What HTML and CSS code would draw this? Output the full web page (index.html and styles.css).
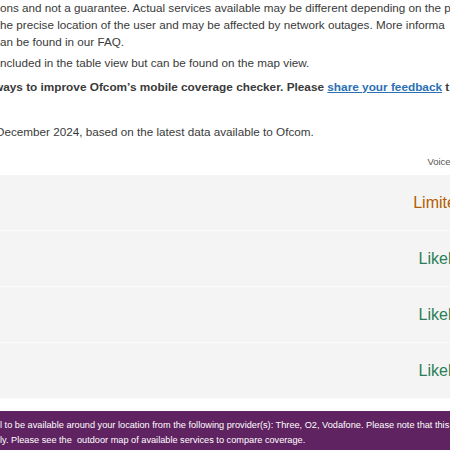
FILE: index.html
```html
<!DOCTYPE html>
<html lang="en">
<head>
    <meta charset="UTF-8">
    <meta name="viewport" content="width=device-width, initial-scale=1.0">
    <title>Mobile coverage checker</title>
    <link rel="stylesheet" href="styles.css">
</head>
<body>
    <section class="notes">
        <p class="note">
            <span class="line">ons and not a guarantee. Actual services available may be different depending on the p</span>
            <span class="line">he precise location of the user and may be affected by network outages. More informa</span>
            <span class="line">an be found in our FAQ.</span>
        </p>
        <p class="note">
            <span class="line">ncluded in the table view but can be found on the map view.</span>
        </p>
        <p class="note note-bold">
            <span class="line cut-w">ways to improve Ofcom’s mobile coverage checker. Please <a href="#" class="feedback-link">share your feedback</a> t</span>
        </p>
        <p class="note note-date">
            <span class="line cut-d">December 2024, based on the latest data available to Ofcom.</span>
        </p>
    </section>

    <section class="coverage">
        <div class="coverage-head">
            <div></div>
            <div class="col-title">Voice</div>
        </div>
        <div class="coverage-row">
            <div></div>
            <div class="status status-limited">Limited</div>
        </div>
        <div class="coverage-row">
            <div></div>
            <div class="status status-likely">Likely</div>
        </div>
        <div class="coverage-row">
            <div></div>
            <div class="status status-likely">Likely</div>
        </div>
        <div class="coverage-row">
            <div></div>
            <div class="status status-likely">Likely</div>
        </div>
    </section>

    <div class="provider-banner">
        <span class="line">l to be available around your location from the following provider(s): Three, O2, Vodafone. Please note that this</span>
        <span class="line">ly. Please see the &nbsp;outdoor map of available services to compare coverage.</span>
    </div>
</body>
</html>
```

FILE: styles.css
```css
* {
    margin: 0;
    padding: 0;
    box-sizing: border-box;
    font-family: 'Liberation Sans', Arial, sans-serif;
}

:root {
    --text: #3a3a3a;
    --row: #f4f4f4;
    --link: #2a70b3;
    --limited: #b35d00;
    --likely: #2b7d58;
    --purple: #5f2361;
}

html, body {
    overflow: hidden;
}

body {
    background-color: #fff;
    color: var(--text);
    width: 450px;
    height: 450px;
}

.notes {
    margin-top: -1px;
}

.note {
    font-size: 11.7px;
    line-height: 17px;
    margin-bottom: 4px;
}

.line {
    display: block;
    white-space: nowrap;
}

.note-bold {
    font-size: 11.8px;
    font-weight: 700;
    margin-top: 8px;
}

.note-date {
    margin-top: 27px;
    margin-bottom: 0;
}

.cut-w {
    margin-left: -6px;
}

.cut-d {
    margin-left: -4px;
}

.feedback-link {
    color: var(--link);
    text-decoration: underline;
}

.coverage {
    width: 469px;
}

.coverage-head {
    display: grid;
    grid-template-columns: 1fr 60px;
    height: 35px;
    align-items: center;
}

.col-title {
    font-size: 9.5px;
    color: #555;
    text-align: center;
    padding-top: 8px;
}

.coverage-row {
    display: grid;
    grid-template-columns: 1fr 60px;
    height: 56px;
    align-items: center;
    background-color: var(--row);
    border-bottom: 1px solid #fbfbfb;
}

.status {
    font-size: 16px;
    text-align: center;
    white-space: nowrap;
}

.status-limited {
    color: var(--limited);
}

.status-likely {
    color: var(--likely);
}

.provider-banner {
    margin-top: 12px;
    background-color: var(--purple);
    color: #fff;
    font-size: 9.2px;
    line-height: 15px;
    padding: 7px 0 20px;
}
```
